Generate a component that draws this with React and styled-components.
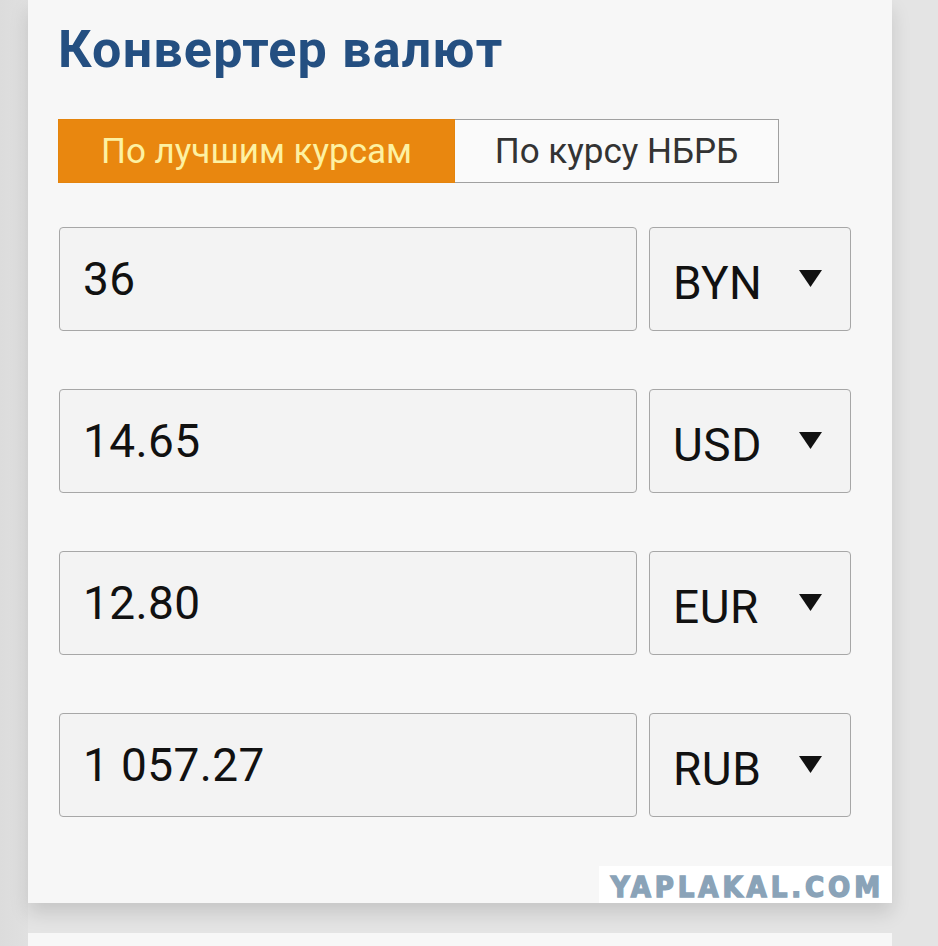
import React from "react";
import styled, { createGlobalStyle } from "styled-components";

const Global = createGlobalStyle`
  html, body { margin: 0; padding: 0; }
  body {
    background: #e2e2e2;
    font-family: Roboto, "Noto Sans", "DejaVu Sans", sans-serif;
    width: 938px;
    height: 946px;
    overflow: hidden;
  }
`;

const Page = styled.div`
  display: flex;
  align-items: flex-start;
  width: 938px;
  height: 946px;
  background: linear-gradient(to right, #dcdcdc 0, #e0e0e0 28px, #e4e4e4 28px);
`;

const Column = styled.div`
  margin-left: 28px;
  width: 864px;
  display: flex;
  flex-direction: column;
  gap: 30px;
`;

const Card = styled.section`
  position: relative;
  background: #f7f7f7;
  padding: 19px 0 86px 30px;
  box-shadow: 0 10px 18px rgba(0, 0, 0, 0.13);
`;

const Title = styled.h1`
  margin: 0;
  font-family: Roboto, "Noto Sans", sans-serif;
  font-weight: 700;
  font-size: 52px;
  line-height: 62px;
  color: #244f81;
  letter-spacing: 1.2px;
`;

const Toggle = styled.div`
  display: flex;
  margin-top: 38px;
  height: 64px;
`;

const ToggleButton = styled.button`
  box-sizing: border-box;
  height: 64px;
  width: ${(p) => p.$w}px;
  padding: 0;
  margin: 0;
  font-family: Roboto, "Noto Sans", sans-serif;
  font-size: 35px;
  font-weight: 400;
  cursor: pointer;
  border: 1px solid ${(p) => (p.$active ? "#e4840d" : "#a0a0a0")};
  border-left-width: ${(p) => (p.$active ? 1 : 0)}px;
  background: ${(p) => (p.$active ? "#e9870f" : "#fafafa")};
  color: ${(p) => (p.$active ? "#fdf1a2" : "#333333")};
`;

const Rows = styled.div`
  display: flex;
  flex-direction: column;
  gap: 58px;
  margin-top: 44px;
  padding-left: 1px;
`;

const Row = styled.div`
  display: flex;
  gap: 12px;
  height: 104px;
`;

const AmountField = styled.div`
  box-sizing: border-box;
  width: 578px;
  height: 104px;
  border: 1px solid #a7a7a7;
  border-radius: 4px;
  background: #f3f3f3;
  display: flex;
  align-items: center;
  padding-left: 23px;
  font-size: 46px;
  letter-spacing: 0.4px;
  color: #111;
  line-height: 1;
`;

const CurrencySelect = styled.div`
  box-sizing: border-box;
  width: 202px;
  height: 104px;
  border: 1px solid #a7a7a7;
  border-radius: 4px;
  background: #f3f3f3;
  display: flex;
  align-items: center;
  justify-content: space-between;
  padding: 8px 28px 0 23px;
  font-size: 46px;
  letter-spacing: 0.5px;
  color: #111;
  line-height: 1;
`;

const Arrow = styled.svg`
  width: 23px;
  height: 17px;
  margin-top: -10px;
  flex: none;
`;

const Watermark = styled.div`
  position: absolute;
  right: 0;
  bottom: 0;
  width: 293px;
  height: 37px;
  background: #ffffff;
  display: flex;
  align-items: center;
  justify-content: flex-end;
  padding: 5px 8px 0 0;
  box-sizing: border-box;
  font-family: "DejaVu Sans Condensed", "DejaVu Sans", sans-serif;
  font-stretch: condensed;
  font-weight: 700;
  font-size: 29px;
  letter-spacing: 3.9px;
  -webkit-text-stroke: 1.4px #8aa3b8;
  color: #8aa3b8;
`;

const NextCard = styled.div`
  background: #f7f7f7;
  height: 40px;
`;

const rows = [
  ["36", "BYN"],
  ["14.65", "USD"],
  ["12.80", "EUR"],
  ["1 057.27", "RUB"],
];

export default function App() {
  return (
    <>
      <Global />
      <Page>
        <Column>
          <Card>
            <Title>Конвертер валют</Title>
            <Toggle>
              <ToggleButton $active $w={397}>По лучшим курсам</ToggleButton>
              <ToggleButton $w={324}>По курсу НБРБ</ToggleButton>
            </Toggle>
            <Rows>
              {rows.map(([amount, cur]) => (
                <Row key={cur}>
                  <AmountField>{amount}</AmountField>
                  <CurrencySelect>
                    <span>{cur}</span>
                    <Arrow viewBox="0 0 23 17">
                      <path d="M0 0 H23 L11.5 17 Z" fill="#111" />
                    </Arrow>
                  </CurrencySelect>
                </Row>
              ))}
            </Rows>
            <Watermark>YAPLAKAL.COM</Watermark>
          </Card>
          <NextCard />
        </Column>
      </Page>
    </>
  );
}
